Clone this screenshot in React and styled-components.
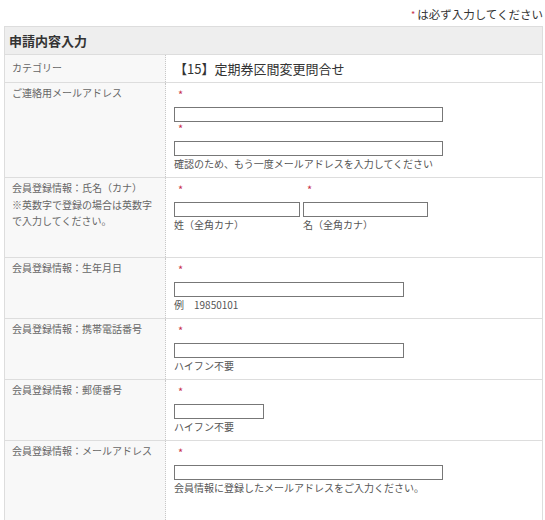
import React from 'react';
import styled, { createGlobalStyle } from 'styled-components';

const GlobalStyle = createGlobalStyle`
    body{
        margin:0;
        background:#fff;
        font-family:"Noto Sans CJK JP", "Noto Sans", sans-serif;
        color:#333;
    }
`;

const Page = styled.div`
    width:545px;
    height:520px;
    overflow:hidden;
`;

const RequiredNote = styled.div`
    display:flex;
    justify-content:flex-end;
    align-items:center;
    height:26px;
    padding:2px 2px 0 0;
    box-sizing:border-box;
    font-size:11.5px;
    color:#333;
    .mark{
        color:#c8324c;
        font-size:9px;
        margin-right:2px;
    }
`;

const Table = styled.table`
    margin-left:4px;
    width:539px;
    border-collapse:collapse;
    border:1px solid #ddd;
    table-layout:fixed;
`;

const HeadCell = styled.th`
    height:27px;
    padding:0 0 0 4px;
    background:#eeeeee;
    text-align:left;
    font-size:13px;
    font-weight:bold;
    color:#333;
    border-bottom:1px solid #ddd;
`;

const Row = styled.tr`
    border-top:1px solid #ddd;
`;

const LabelCell = styled.td`
    width:160px;
    padding:2px 4px 0 7px;
    vertical-align:top;
    background:#f8f8f8;
    border-right:1px dotted #c8c8c8;
    font-size:10px;
    line-height:16.5px;
    color:#666;
`;

const ValueCell = styled.td`
    padding:5px 8px ${p => p.$bottom || 5}px 8px;
    vertical-align:top;
    font-size:10px;
    line-height:16px;
    color:#555;
`;

const CategoryValue = styled.td`
    height:27px;
    padding:0 8px;
    vertical-align:middle;
    font-size:13px;
    color:#333;
`;

const Req = styled.div`
    height:19px;
    padding-left:4px;
    font-size:11px;
    line-height:13px;
    color:#c8324c;
`;

const Input = styled.input`
    display:block;
    box-sizing:border-box;
    width:${p => p.$w}px;
    height:15px;
    margin:0;
    padding:0 2px;
    border:1px solid #777;
    border-radius:0;
    background:#fff;
`;

const Note = styled.div`
    height:16px;
    white-space:nowrap;
`;

const NameFields = styled.div`
    display:flex;
    gap:3px;
`;

const NameField = styled.div`
    display:flex;
    flex-direction:column;
`;

const rows = [
    { label: '会員登録情報：生年月日', width: 230, note: '例　19850101' },
    { label: '会員登録情報：携帯電話番号', width: 230, note: 'ハイフン不要' },
    { label: '会員登録情報：郵便番号', width: 90, note: 'ハイフン不要' },
];

function Field({ width, note }) {
    return (
        <>
            <Req>*</Req>
            <Input $w={width} />
            {note && <Note>{note}</Note>}
        </>
    );
}

export default function App() {
    return (
        <Page>
            <GlobalStyle />
            <RequiredNote><span className="mark">*</span>は必ず入力してください</RequiredNote>
            <Table>
                <colgroup>
                    <col style={{ width: 161 }} />
                    <col />
                </colgroup>
                <thead>
                    <tr><HeadCell colSpan={2}>申請内容入力</HeadCell></tr>
                </thead>
                <tbody>
                    <Row>
                        <LabelCell style={{ verticalAlign: 'middle', paddingTop: 0 }}>カテゴリー</LabelCell>
                        <CategoryValue>【15】定期券区間変更問合せ</CategoryValue>
                    </Row>
                    <Row>
                        <LabelCell>ご連絡用メールアドレス</LabelCell>
                        <ValueCell>
                            <Field width={269} />
                            <Field width={269} note="確認のため、もう一度メールアドレスを入力してください" />
                        </ValueCell>
                    </Row>
                    <Row>
                        <LabelCell>
                            会員登録情報：氏名（カナ）<br />
                            ※英数字で登録の場合は英数字<br />
                            で入力してください。
                        </LabelCell>
                        <ValueCell $bottom={24}>
                            <NameFields>
                                <NameField><Field width={126} note="姓（全角カナ）" /></NameField>
                                <NameField><Field width={125} note="名（全角カナ）" /></NameField>
                            </NameFields>
                        </ValueCell>
                    </Row>
                    {rows.map(r => (
                        <Row key={r.label}>
                            <LabelCell>{r.label}</LabelCell>
                            <ValueCell><Field width={r.width} note={r.note} /></ValueCell>
                        </Row>
                    ))}
                    <Row>
                        <LabelCell>会員登録情報：メールアドレス</LabelCell>
                        <ValueCell $bottom={40}>
                            <Field width={269} note="会員情報に登録したメールアドレスをご入力ください。" />
                        </ValueCell>
                    </Row>
                </tbody>
            </Table>
        </Page>
    );
}
